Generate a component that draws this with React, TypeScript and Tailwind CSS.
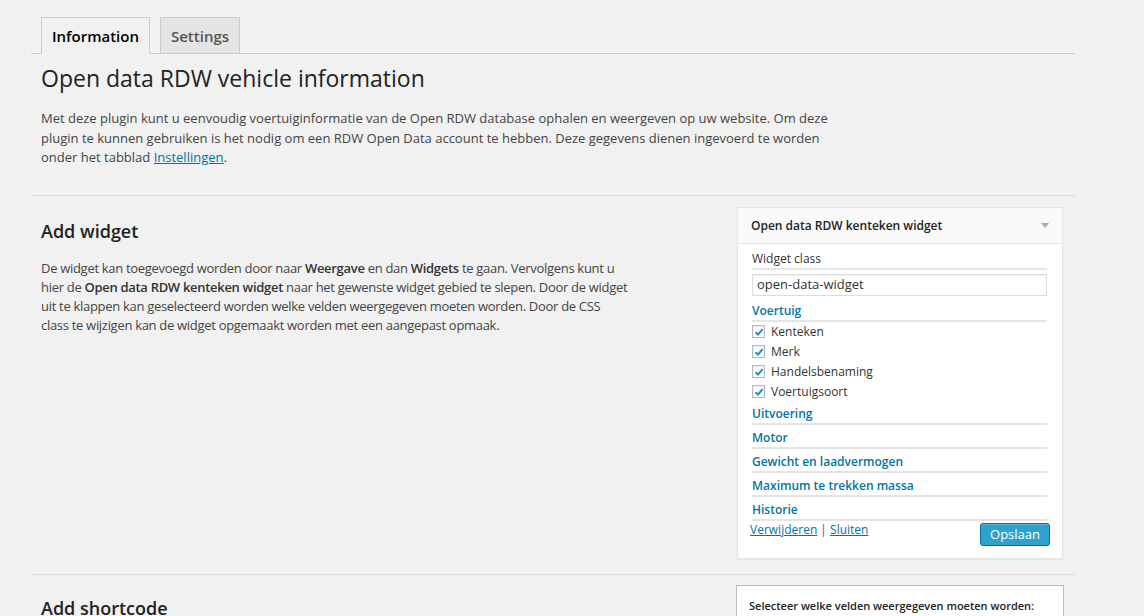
const fields = ['Kenteken', 'Merk', 'Handelsbenaming', 'Voertuigsoort'];
const groups = ['Motor', 'Gewicht en laadvermogen', 'Maximum te trekken massa', 'Historie'];

const Check = () => (
    <span className="w-[13px] h-[13px] border border-[#b4b9be] bg-white shadow-[inset_0_1px_2px_rgba(0,0,0,0.1)] flex items-center justify-center">
        <svg width="10" height="10" viewBox="0 0 10 10">
            <path d="M1.5 5.2 L4 7.6 L8.6 2.2" fill="none" stroke="#1e8cbe" strokeWidth="2" />
        </svg>
    </span>
);

const WidgetBox = () => (
    <div className="w-[326px] mr-[12px] bg-white border border-[#e5e5e5] shadow-[0_1px_1px_rgba(0,0,0,0.04)]">
        <div className="h-[36px] pt-[1px] pl-[13px] pr-[13px] flex items-center justify-between bg-[#fafafa] border-b border-[#e5e5e5]">
            <span className="text-[12px] font-semibold text-[#222]">Open data RDW kenteken widget</span>
            <svg width="8" height="5" viewBox="0 0 8 5">
                <path d="M0 0 H8 L4 5 Z" fill="#aaa" />
            </svg>
        </div>
        <div className="pl-[13px] pr-[12px] pt-[6px] pb-[12px]">
            <div className="ml-[1px] mr-[3px]">
                <div className="leading-[18px] text-[12px] text-[#333] border-b-2 border-[#e5e5e5]">Widget class</div>
                <div className="mt-[4px] h-[22px] border border-[#ddd] shadow-[inset_0_1px_2px_rgba(0,0,0,0.07)] px-[4px] flex items-center text-[13px] text-[#333]">
                    open-data-widget
                </div>
                <div className="pt-[6px] leading-[18px] text-[12px] font-semibold text-[#0074a2] border-b-2 border-[#e5e5e5]">Voertuig</div>
                {fields.map((f) => (
                    <div key={f} className="h-[20px] flex items-center gap-[6px] text-[12px] text-[#333]">
                        <Check />
                        <span>{f}</span>
                    </div>
                ))}
                <div className="pt-[3px] leading-[18px] text-[12px] font-semibold text-[#0074a2] border-b-2 border-[#e5e5e5]">Uitvoering</div>
                {groups.map((g) => (
                    <div key={g} className="pt-[4px] leading-[18px] text-[12px] font-semibold text-[#0074a2] border-b-2 border-[#e5e5e5]">{g}</div>
                ))}
            </div>
            <div className="flex justify-between items-start">
                <div className="-ml-[1px] leading-[17px] text-[12px] text-[#555]">
                    <a className="text-[#0074a2] underline">Verwijderen</a> | <a className="text-[#0074a2] underline">Sluiten</a>
                </div>
                <button className="mt-[2px] h-[23px] px-[9px] rounded-[3px] bg-[#2ea2cc] border border-[#0074a2] text-white text-[13px] leading-[21px] shadow-[inset_0_1px_0_rgba(120,200,230,0.5)]">
                    Opslaan
                </button>
            </div>
        </div>
    </div>
);

export default function App() {
    return (
        <div className="min-h-[616px] h-[616px] overflow-hidden bg-[#f1f1f1] font-['Open_Sans',sans-serif] text-[#444]">
            <div className="ml-[31px] w-[1044px] pt-[17px]">
                <nav className="flex items-end gap-[10px] pl-[10px] border-b border-[#ccc]">
                    <div className="h-[37px] -mb-px pt-[1px] px-[10px] flex items-center border border-[#ccc] border-b-[#f1f1f1] bg-[#f1f1f1] text-[15px] font-semibold text-[#000]">
                        Information
                    </div>
                    <div className="h-[37px] -mb-px pt-[1px] px-[10px] flex items-center border border-[#ccc] bg-[#e4e4e4] text-[15px] font-semibold text-[#555]">
                        Settings
                    </div>
                </nav>

                <div className="px-[10px]">
                    <h1 className="mt-[9px] text-[23px] leading-[30px] text-[#222]">Open data RDW vehicle information</h1>
                    <p className="mt-[16px] w-[790px] text-[13px] leading-[19.5px]">
                        Met deze plugin kunt u eenvoudig voertuiginformatie van de Open RDW database ophalen en weergeven op uw website. Om deze plugin te kunnen gebruiken is het nodig om een RDW Open Data account te hebben. Deze gegevens dienen ingevoerd te worden onder het tabblad <a className="text-[#0074a2] underline">Instellingen</a>.
                    </p>
                </div>

                <div className="mt-[27px] border-t border-[#ddd] pt-[11px] pb-[15px] flex justify-between items-start">
                    <div className="px-[10px] pt-[13px]">
                        <h2 className="text-[18px] leading-[23px] font-semibold text-[#222]">Add widget</h2>
                        <p className="mt-[16px] w-[589px] text-[13px] leading-[19px] tracking-[-0.3px]">
                            De widget kan toegevoegd worden door naar <b className="font-semibold text-[#333]">Weergave</b> en dan <b className="font-semibold text-[#333]">Widgets</b> te gaan. Vervolgens kunt u hier de <b className="font-semibold text-[#333]">Open data RDW kenteken widget</b> naar het gewenste widget gebied te slepen. Door de widget uit te klappen kan geselecteerd worden welke velden weergegeven moeten worden. Door de CSS class te wijzigen kan de widget opgemaakt worden met een aangepast opmaak.
                        </p>
                    </div>
                    <WidgetBox />
                </div>

                <div className="border-t border-[#ddd] pt-[10px] flex justify-between items-start">
                    <div className="px-[10px] pt-[12px]">
                        <h2 className="text-[18px] leading-[23px] font-semibold text-[#222]">Add shortcode</h2>
                    </div>
                    <div className="w-[328px] mr-[11px] h-[60px] bg-white border border-[#bbb] px-[12px] pt-[12px]">
                        <div className="text-[11px] font-semibold text-[#222]">Selecteer welke velden weergegeven moeten worden:</div>
                    </div>
                </div>
            </div>
        </div>
    );
}
